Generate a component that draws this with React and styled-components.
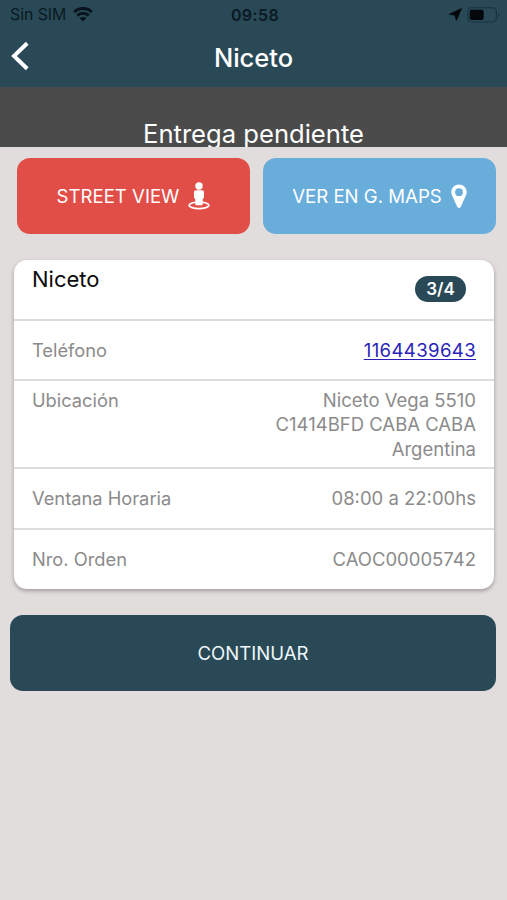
import React from "react";
import styled, { createGlobalStyle } from "styled-components";

const rows = [
  { label: "Teléfono", value: "1164439643", phone: true },
  {
    label: "Ubicación",
    value: "Niceto Vega 5510\nC1414BFD CABA CABA\nArgentina",
    height: 88,
    top: true,
  },
  { label: "Ventana Horaria", value: "08:00 a 22:00hs", height: 61 },
  { label: "Nro. Orden", value: "CAOC00005742", height: 61 },
];

const WifiIcon = () => (
  <svg width="20" height="15" viewBox="0 0 20 15" fill="none" stroke="#07141d">
    <path d="M1.2 5.1C6 .2 14 .2 18.8 5.1" strokeWidth="3.1" />
    <path d="M4.3 8.6c3.300-3.100 8.100-3.100 11.400 0" strokeWidth="2.9" />
    <path d="M10 14.6l-3.300-3.400c1.800-1.700 4.800-1.700 6.600 0z" fill="#07141d" stroke="none" />
  </svg>
);

const ArrowIcon = () => (
  <svg width="13" height="13" viewBox="0 0 13 13" fill="#04080c" stroke="#04080c" strokeWidth=".8">
    <path d="M12.4.6L7.4 12.4 6 7.200.4 6.200z" />
  </svg>
);

const BatteryIcon = () => (
  <svg width="33" height="16" viewBox="0 0 33 16">
    <rect x=".8" y=".8" width="28.6" height="14.2" rx="4" fill="none" stroke="#19323f" strokeWidth="1.1" />
    <rect x="2.7" y="2.8" width="14" height="10.2" rx="2" fill="#04080c" />
    <path d="M31 5.600c1.500.6 1.500 4.200 0 4.800z" fill="#19323f" />
  </svg>
);

const BackIcon = () => (
  <svg width="20" height="30" viewBox="0 0 20 30" fill="none" stroke="#fff" strokeWidth="4">
    <path d="M17.2 2.2L4 15l13.2 12.8" />
  </svg>
);

const StreetViewIcon = () => (
  <svg width="22" height="28" viewBox="0 0 22 28" fill="#fff">
    <ellipse cx="11" cy="23.3" rx="9.8" ry="3.3" fill="none" stroke="#fff" strokeWidth="1.7" />
    <circle cx="11" cy="4" r="3.7" />
    <path d="M8 8.200h6c1.300 0 2 .8 2 2v4.800c0 1-.5 1.600-1.300 1.900v5c0 .8-.5 1.300-1.300 1.300H8.600c-.8 0-1.300-.5-1.300-1.300v-5C6.500 16.600 6 16 6 15v-4.800c0-1.200.7-2 2-2z" />
  </svg>
);

const PinIcon = () => (
  <svg width="16" height="25" viewBox="0 0 16 25" fill="#fff" fillRule="evenodd">
    <path d="M8 .5C3.700.500.300 3.900.300 8.100c0 1.300.3 2.400.8 3.500l5.100 11.100c.7 1.600 2.900 1.600 3.600 0l5.100-11.100c.5-1.100.8-2.200.8-3.500C15.700 3.900 12.300.5 8 .5zM8 4.300a3.900 3.900 0 1 1 0 7.800 3.900 3.900 0 0 1 0-7.800z" />
  </svg>
);

const App = () => {
  return (
    <Screen>
      <GlobalStyle />
      <Header>
        <StatusBar>
          <Carrier>
            Sin SIM <WifiIcon />
          </Carrier>
          <Clock>09:58</Clock>
          <StatusIcons>
            <ArrowIcon />
            <BatteryIcon />
          </StatusIcons>
        </StatusBar>
        <NavBar>
          <BackButton aria-label="Volver">
            <BackIcon />
          </BackButton>
          <Title>Niceto</Title>
        </NavBar>
      </Header>
      <StatusBanner>Entrega pendiente</StatusBanner>
      <Actions>
        <ActionButton $color="#e14e47">
          STREET VIEW <StreetViewIcon />
        </ActionButton>
        <ActionButton $color="#69addb">
          VER EN G. MAPS <PinIcon />
        </ActionButton>
      </Actions>
      <Card>
        <CardHeader>
          <CardTitle>Niceto</CardTitle>
          <Badge>3/4</Badge>
        </CardHeader>
        {rows.map((row) => (
          <Row key={row.label} $height={row.height} $top={row.top}>
            <span>{row.label}</span>
            {row.phone ? (
              <PhoneLink href={"tel:" + row.value}>{row.value}</PhoneLink>
            ) : (
              <Value>{row.value}</Value>
            )}
          </Row>
        ))}
      </Card>
      <ContinueButton>CONTINUAR</ContinueButton>
    </Screen>
  );
};

export default App;

const GlobalStyle = createGlobalStyle`
  * {
    box-sizing: border-box;
  }
  body {
    margin: 0;
    background: #e2dddd;
  }
  button {
    font-family: inherit;
    border: none;
    padding: 0;
  }
  svg {
    flex-shrink: 0;
  }
`;

const Screen = styled.div`
  height: 900px;
  overflow: hidden;
  background: #e2dddd;
  font-family: Inter, "Liberation Sans", sans-serif;
`;

const Header = styled.header`
  height: 87px;
  background: #294956;
`;

const StatusBar = styled.div`
  height: 29px;
  padding: 0 7px 0 10px;
  display: grid;
  grid-template-columns: 1fr auto 1fr;
  align-items: center;
  color: #0a1a24;
`;

const Carrier = styled.div`
  display: flex;
  align-items: center;
  gap: 7px;
  font-size: 15.8px;
`;

const Clock = styled.div`
  font-size: 16px;
  font-weight: 600;
  letter-spacing: 0.4px;
`;

const StatusIcons = styled.div`
  display: flex;
  align-items: center;
  justify-content: flex-end;
  gap: 5px;
`;

const NavBar = styled.div`
  height: 57px;
  padding: 0 10px;
  display: grid;
  grid-template-columns: 1fr auto 1fr;
  align-items: center;
`;

const BackButton = styled.button`
  width: 20px;
  height: 34px;
  background: none;
  display: flex;
`;

const Title = styled.h1`
  margin: 0;
  color: #fff;
  font-size: 25.5px;
  font-weight: 500;
`;

const StatusBanner = styled.div`
  height: 60px;
  padding-top: 32px;
  overflow: hidden;
  background: #4b4b4b;
  color: #fff;
  font-size: 25.6px;
  line-height: 30px;
  text-align: center;
`;

const Actions = styled.div`
  display: grid;
  grid-template-columns: 1fr 1fr;
  gap: 13px;
  padding: 11px 11px 0 17px;
`;

const ActionButton = styled.button`
  height: 76px;
  border-radius: 13px;
  background: ${(props) => props.$color};
  color: #fff;
  font-size: 18.6px;
  display: flex;
  align-items: center;
  justify-content: center;
  gap: 9px;
`;

const Card = styled.section`
  margin: 26px 13px 0 14px;
  border-radius: 13px;
  overflow: hidden;
  background: #fff;
  box-shadow: 0 2px 4px rgba(0, 0, 0, 0.3);
`;

const CardHeader = styled.div`
  height: 59px;
  padding: 6px 28px 0 18px;
  display: flex;
  justify-content: space-between;
`;

const CardTitle = styled.h2`
  margin: 0;
  font-size: 22px;
  line-height: 27px;
  font-weight: 400;
  color: #0b0b0b;
`;

const Badge = styled.span`
  width: 51px;
  height: 26px;
  margin-top: 10px;
  border-radius: 13px;
  background: #294956;
  color: #fff;
  font-size: 17px;
  line-height: 26px;
  font-weight: 600;
  text-align: center;
`;

const Row = styled.div`
  height: ${(props) => props.$height || 60}px;
  padding: ${(props) => (props.$top ? "7px" : "0")} 18px 0;
  border-top: 2px solid #dddcdc;
  display: flex;
  justify-content: space-between;
  align-items: ${(props) => (props.$top ? "flex-start" : "center")};
  color: #8b8b8b;
  font-size: 18.3px;
  line-height: 24.4px;
`;

const Value = styled.span`
  text-align: right;
  white-space: pre-line;
  font-size: 18.5px;
`;

const PhoneLink = styled.a`
  color: #2a1fb8;
  font-size: 18.6px;
  letter-spacing: 0.35px;
  text-underline-offset: 2px;
`;

const ContinueButton = styled.button`
  display: block;
  width: 486px;
  height: 76px;
  margin: 26px 0 0 10px;
  border-radius: 13px;
  background: #294956;
  color: #eef6fa;
  font-size: 18.6px;
`;
